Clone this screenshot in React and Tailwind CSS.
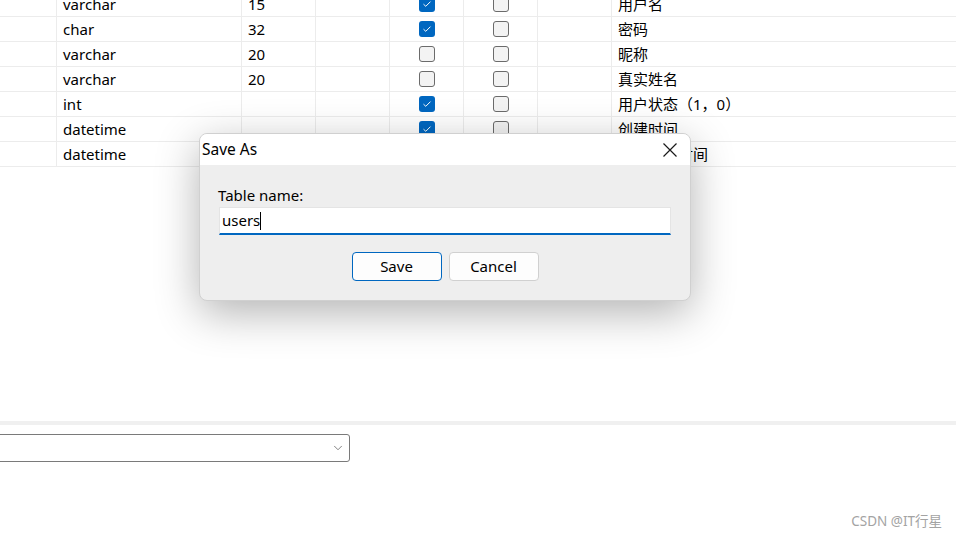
import React from 'react';
import { ChevronDown } from 'lucide-react';

const rows = [
    { type: 'varchar', len: '15', notNull: true, key: false, note: '用户名' },
    { type: 'char', len: '32', notNull: true, key: false, note: '密码' },
    { type: 'varchar', len: '20', notNull: false, key: false, note: '昵称' },
    { type: 'varchar', len: '20', notNull: false, key: false, note: '真实姓名' },
    { type: 'int', len: '', notNull: true, key: false, note: '用户状态（1，0）' },
    { type: 'datetime', len: '', notNull: true, key: false, note: '创建时间' },
    { type: 'datetime', len: '', notNull: true, key: false, note: '最后登录时间' },
];

const font = { fontFamily: '"Noto Sans", "Noto Sans CJK SC", sans-serif' };

// Windows 11 style checkbox
const Check = ({ checked }) =>
    checked ? (
        <div className="w-4 h-4 rounded-[3px] bg-[#0067c0] flex items-center justify-center">
            <svg width="10" height="8" viewBox="0 0 10 8" fill="none">
                <path d="M1.5 4.2 L3.8 6.3 L8.5 1.6" stroke="white" strokeWidth="1" />
            </svg>
        </div>
    ) : (
        <div className="w-4 h-4 rounded-[3px] border border-[#6b6b6b] bg-[#f3f3f3]"></div>
    );

const Cell = ({ children, className = '' }) => (
    <div className={`h-[25px] border-r border-b border-[#ececec] flex items-center ${className}`}>
        {children}
    </div>
);

export default function App() {
    return (
        <div className="relative w-[956px] h-[539px] overflow-hidden bg-white text-[15px] text-black" style={font}>
            {/* Fields grid */}
            <div className="-mt-[8px] grid grid-cols-[57px_185px_74px_74px_74px_74px_74px_1fr]">
                {rows.map((r, i) => (
                    <React.Fragment key={i}>
                        <Cell />
                        <Cell className="pl-[6px]">{r.type}</Cell>
                        <Cell className="pl-[6px]">{r.len}</Cell>
                        <Cell />
                        <Cell className="justify-center"><Check checked={r.notNull} /></Cell>
                        <Cell className="justify-center"><Check checked={r.key} /></Cell>
                        <Cell />
                        <Cell className="pl-[6px] border-r-0">{r.note}</Cell>
                    </React.Fragment>
                ))}
            </div>

            {/* Bottom panel */}
            <div className="mt-[254px] h-[4px] bg-[#f0f0f0]"></div>
            <div className="mt-[9px] -ml-[2px] w-[352px] h-[28px] border border-[#7a7a7a] rounded-r-[3px] bg-white flex items-center justify-end pr-[4px]">
                <ChevronDown className="w-[14px] h-[14px] text-[#555]" strokeWidth={1.25} />
            </div>

            <div className="absolute right-[14px] bottom-[8px] text-[13.5px] text-[#a3a3a3]">CSDN @IT行星</div>

            {/* Save As dialog */}
            <div className="absolute left-[199px] top-[133px] w-[492px] h-[168px] rounded-[8px] overflow-hidden bg-[#eeeeee] border border-[#d0d0d0] shadow-[0_12px_44px_rgba(0,0,0,0.3)] flex flex-col">
                <div className="h-[31px] bg-white flex items-center justify-between pl-[2px] pr-[13px]">
                    <span className="text-[15.5px]">Save As</span>
                    <svg width="14" height="14" viewBox="0 0 14 14" fill="none">
                        <path d="M0.5 0.5 L13.5 13.5 M13.5 0.5 L0.5 13.5" stroke="#1a1a1a" strokeWidth="1.2" />
                    </svg>
                </div>
                <div className="px-[19px] pt-[20px]">
                    <div className="-ml-[1px] text-[15px] leading-[20px]">Table name:</div>
                    <div className="mt-[2px] h-[28px] bg-white border border-[#e4e4e4] border-b-2 border-b-[#0067c0] flex items-center pl-[2px]">
                        <span>users</span>
                        <span className="w-px h-[18px] bg-black"></span>
                    </div>
                    <div className="mt-[17px] flex justify-center gap-[7px]">
                        <button className="w-[90px] h-[29px] rounded-[4px] border border-[#0067c0] bg-[#fdfdfd] text-[15px]">Save</button>
                        <button className="w-[90px] h-[29px] rounded-[4px] border border-[#d0d0d0] bg-[#fdfdfd] text-[15px]">Cancel</button>
                    </div>
                </div>
            </div>
        </div>
    );
}
